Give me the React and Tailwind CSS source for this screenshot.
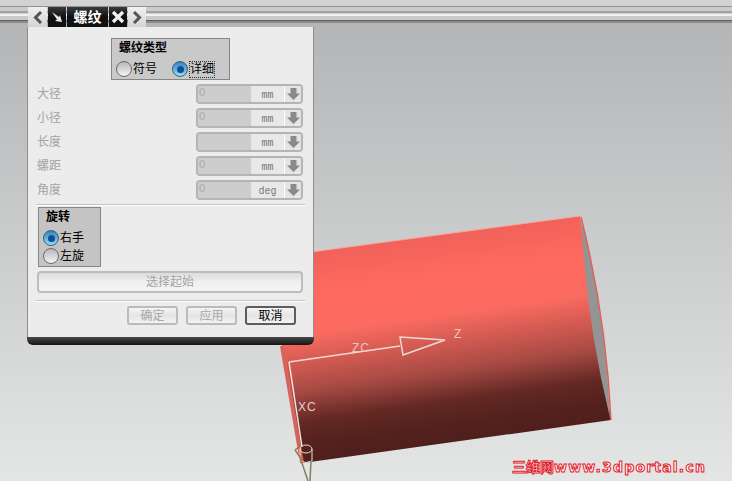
const CJK = { fontFamily: '"Liberation Sans","Noto Sans CJK SC",sans-serif' };

function Radio({ on }) {
  return on ? (
    <span className="w-4 h-4 rounded-full shrink-0 border border-[#3b5f7a] bg-gradient-to-b from-[#2f83bd] to-[#9adcf4] flex items-center justify-center">
      <span className="w-[7px] h-[7px] rounded-full bg-[#0b4f9a]" />
    </span>
  ) : (
    <span className="w-4 h-4 rounded-full shrink-0 border border-[#6a6a6a] bg-gradient-to-b from-[#b8b8b8] to-[#f4f4f4]" />
  );
}

function Spin({ label, value, unit }) {
  return (
    <div className="flex items-center h-5">
      <span className="ml-[9px] w-[159px] text-[12px] leading-[20px] text-[#a4a4a4]">{label}</span>
      <div className="w-[107px] h-5 flex rounded-[4px] border-2 border-[#b4b4b4] overflow-hidden bg-[#e8e8e8]">
        <span className="w-[53px] bg-[#cdcdcd] text-[11px] leading-[13px] pl-[1px] text-[#a9a9a9]">{value}</span>
        <span className="w-[33px] flex items-center justify-center font-['Liberation_Mono'] text-[10px] leading-[12px] pt-[3px] text-[#777]">{unit}</span>
        <span className="flex-1 border-l border-white flex items-center justify-center bg-[#e4e4e4]">
          <svg width="15" height="14" viewBox="0 0 15 14"><path d="M4.500 1h6v5.500H14L7.500 13 1 6.500h3.500z" fill="#8a8a8a" /></svg>
        </span>
      </div>
    </div>
  );
}

function Btn({ children, dark }) {
  return (
    <div className={`w-[51px] h-[19px] rounded-[3px] border-2 flex items-center justify-center text-[12px] bg-gradient-to-b from-[#f5f5f5] via-[#e4e4e4] to-[#f3f3f3] ${dark ? 'border-[#5c5c5c] text-black' : 'border-[#bbbbbb] text-[#a8a8a8]'}`}>
      {children}
    </div>
  );
}

function Tab({ children, w, dark }) {
  return (
    <div className={`h-[20px] flex items-center justify-center ${w} ${dark ? 'bg-gradient-to-b from-[#3a3a3a] via-[#111] to-[#111]' : 'bg-gradient-to-b from-[#f0f0f0] to-[#d4d4d4]'}`}>
      {children}
    </div>
  );
}

function Scene() {
  return (
    <svg width="732" height="481" viewBox="0 0 732 481" className="block">
      <defs>
        <linearGradient id="cyl" gradientUnits="userSpaceOnUse" x1="581" y1="216" x2="610" y2="420">
          <stop offset="0" stopColor="#f0625a" />
          <stop offset="0.2" stopColor="#ff6a5f" />
          <stop offset="0.38" stopColor="#fb6b61" />
          <stop offset="0.5" stopColor="#d65c53" />
          <stop offset="0.65" stopColor="#a84a44" />
          <stop offset="0.8" stopColor="#632823" />
          <stop offset="0.9" stopColor="#55221e" />
          <stop offset="1" stopColor="#4f1f1c" />
        </linearGradient>
      </defs>
      <path d="M266 258 L580 216 L611 420 L303 463 Z" fill="url(#cyl)" />
      <path d="M266 258 L580 216" stroke="#f7a79f" strokeWidth="1" fill="none" />
      <path d="M581 217 Q606 316 610 418 Q586 320 581 217 Z" fill="#949494" />
      <path d="M581 217 Q606 316 611 420" stroke="#d9655d" strokeWidth="1.500" fill="none" />
      <path d="M282 346 L302 463" stroke="#d9635b" strokeWidth="4" fill="none" />
      <path d="M289 362 L400 346 M400 337 L445 340 L403 355 Z" stroke="#eed9d4" strokeWidth="1.500" fill="none" />
      <path d="M289 362 L302 447" stroke="#f3e6e2" strokeWidth="1.500" fill="none" />
      <ellipse cx="306" cy="449" rx="6" ry="4" stroke="#e8e0d0" strokeWidth="1" fill="none" />
      <path d="M300 449 V461 M312 449 V461 M300 461 Q306 464 312 461" stroke="#e8e0d0" strokeWidth="1" fill="none" />
      <path d="M295 450 L300 457 L308 481 M311 461 L310 481 M295 450 L300 446" stroke="#85805c" strokeWidth="1.500" fill="none" />
      <text x="352" y="352" fontSize="12" letterSpacing="1" fill="#eec3bc" fontFamily="Liberation Sans">ZC</text>
      <text x="454" y="338" fontSize="12" fill="#f2c5be" fontFamily="Liberation Sans">Z</text>
      <text x="298" y="411" fontSize="12" letterSpacing="1" fill="#e4cfca" fontFamily="Liberation Sans">XC</text>
    </svg>
  );
}

export default function App() {
  return (
    <div className="relative w-[732px] h-[481px] overflow-hidden flex flex-col text-black" style={CJK}>
      <div className="shrink-0">
        <div className="h-[6px] bg-[#d2d2d2]" />
        <div className="h-px bg-[#919191]" />
        <div className="h-[4px] bg-[#cbcbcb]" />
        <div className="h-[2px] bg-[#a3a3a3]" />
        <div className="h-px bg-[#cfcfcf]" />
        <div className="h-[2px] bg-[#f0f0f0]" />
        <div className="h-[4px] bg-[#c9c9c9]" />
        <div className="h-[1px] bg-[#5f5f5f]" />
        <div className="h-[2px] bg-[#8b8b8b]" />
      </div>
      <div className="flex-1 bg-gradient-to-b from-[#b4b5b6] to-[#e4e5e5]" />

      <div className="absolute left-0 top-0"><Scene /></div>

      <div className="absolute left-[27px] top-[7px] w-[287px]">
        <div className="flex gap-px ml-px w-fit">
          <Tab w="w-[19px]">
            <svg width="10" height="13" viewBox="0 0 10 13"><path d="M8 1L2.500 6.500 8 12" stroke="#555" strokeWidth="3" fill="none" /></svg>
          </Tab>
          <Tab w="w-[18px]" dark>
            <svg width="14" height="14" viewBox="0 0 14 14"><path d="M2 2l7 5 1-2 2 7-7-1 2-1.500z" fill="#e8e8e8" /></svg>
          </Tab>
          <Tab w="w-[41px]" dark>
            <span className="text-[14px] font-bold text-white">螺纹</span>
          </Tab>
          <Tab w="w-[18px]" dark>
            <svg width="14" height="14" viewBox="0 0 14 14"><path d="M2 2l10 10M12 2L2 12" stroke="#f2f2f2" strokeWidth="3.200" /></svg>
          </Tab>
          <Tab w="w-[18px]">
            <svg width="10" height="13" viewBox="0 0 10 13"><path d="M2 1l5.500 5.500L2 12" stroke="#555" strokeWidth="3" fill="none" /></svg>
          </Tab>
        </div>

        <div className="h-[310px] bg-[#ececec] border-x border-[#8e8e8e] flex flex-col pt-[11px]">
          <div className="ml-[83px] w-[119px] h-[42px] bg-[#c9c9c9] border border-[#868686] pl-1">
            <div className="text-[12px] font-bold leading-[16px] pl-[3px] mt-[1px]">螺纹类型</div>
            <div className="flex items-center mt-[4px] text-[12px] h-[18px]">
              <Radio />
              <span className="ml-[1px] w-[39px]">符号</span>
              <Radio on />
              <span className="ml-[1px] border border-dotted border-[#333] leading-[15px]">详细</span>
            </div>
          </div>

          <div className="flex flex-col gap-1 mt-1">
            <Spin label="大径" value="0" unit="mm" />
            <Spin label="小径" value="0" unit="mm" />
            <Spin label="长度" value="" unit="mm" />
            <Spin label="螺距" value="0" unit="mm" />
            <Spin label="角度" value="0" unit="deg" />
          </div>

          <div className="h-[2px] bg-white border-t border-[#c4c4c4] mx-[8px] mt-1" />

          <div className="ml-[10px] mt-[1px] w-[63px] h-[60px] bg-[#c4c4c4] border border-[#868686] pl-1 text-[12px]">
            <div className="font-bold leading-[16px] pl-[3px] mt-[1px]">旋转</div>
            <div className="flex items-center h-[18px] mt-[4px]"><Radio on /><span className="ml-[1px]">右手</span></div>
            <div className="flex items-center h-[18px]"><Radio /><span className="ml-[1px]">左旋</span></div>
          </div>

          <div className="ml-[9px] mt-[4px] w-[266px] h-[22px] rounded-[4px] border-2 border-[#bdbdbd] bg-gradient-to-b from-[#dcdcdc] via-[#f0f0f0] to-[#f4f4f4] flex items-center justify-center text-[12px] text-[#a4a4a4]">
            选择起始
          </div>

          <div className="h-[2px] bg-white border-t border-[#c4c4c4] mx-[8px] mt-[7px]" />

          <div className="flex gap-2 ml-[99px] mt-[4px]">
            <Btn>确定</Btn>
            <Btn>应用</Btn>
            <Btn dark>取消</Btn>
          </div>
        </div>

        <div className="h-[8px] bg-gradient-to-b from-[#4a4a4a] to-[#151515] rounded-b-[6px]" />
      </div>

      <div className="absolute left-[512px] top-[459px] text-[14px] leading-[16px] font-bold whitespace-nowrap text-white [-webkit-text-stroke:1px_#e0202a] font-['DejaVu_Sans','Noto_Sans_CJK_SC',sans-serif]">
        三维网<span className="text-[14px] tracking-[1.200px]">www.3dportal.cn</span>
      </div>
    </div>
  );
}
